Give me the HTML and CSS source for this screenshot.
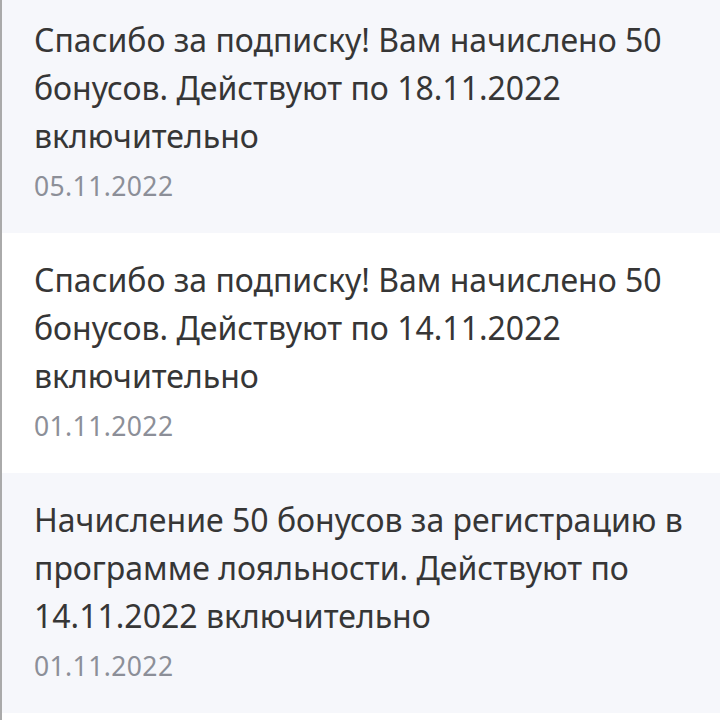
FILE: index.html
```html
<!DOCTYPE html>
<html lang="ru">
<head>
    <meta charset="UTF-8">
    <meta name="viewport" content="width=device-width, initial-scale=1.0">
    <title>Уведомления</title>
    <link rel="stylesheet" href="styles.css">
</head>
<body>
    <div id="lista">
        <div class="item cinza primeiro">
            <p class="texto">Спасибо за подписку! Вам начислено 50 бонусов. Действуют по 18.11.2022 включительно</p>
            <span class="data">05.11.2022</span>
        </div>
        <div class="item">
            <p class="texto">Спасибо за подписку! Вам начислено 50 бонусов. Действуют по 14.11.2022 включительно</p>
            <span class="data">01.11.2022</span>
        </div>
        <div class="item cinza">
            <p class="texto">Начисление 50 бонусов за регистрацию в программе лояльности. Действуют по 14.11.2022 включительно</p>
            <span class="data">01.11.2022</span>
        </div>
    </div>
</body>
</html>
```

FILE: styles.css
```css
*{
    margin: 0;
    padding: 0;
    box-sizing: border-box;
}

body{
    background: #ffffff;
    overflow: hidden;
}

#lista{
    display: flex;
    flex-direction: column;
    border-left: solid 2px rgb(170, 170, 170);
    min-height: 720px;
}
.item{
    display: flex;
    flex-direction: column;
    height: 240px;
    padding: 23px 20px 0 32px;
    background: #ffffff;
}
.cinza{
    background: #f6f7fb;
}
.primeiro{
    margin-top: -7px;
}
.texto{
    font-family: "Noto Sans", sans-serif;
    font-size: 32px;
    line-height: 48px;
    color: #363636;
}
.data{
    font-family: "Noto Sans", sans-serif;
    font-size: 26.5px;
    line-height: 36px;
    letter-spacing: 0.4px;
    margin-top: 8px;
    color: #8c8f98;
}
```
